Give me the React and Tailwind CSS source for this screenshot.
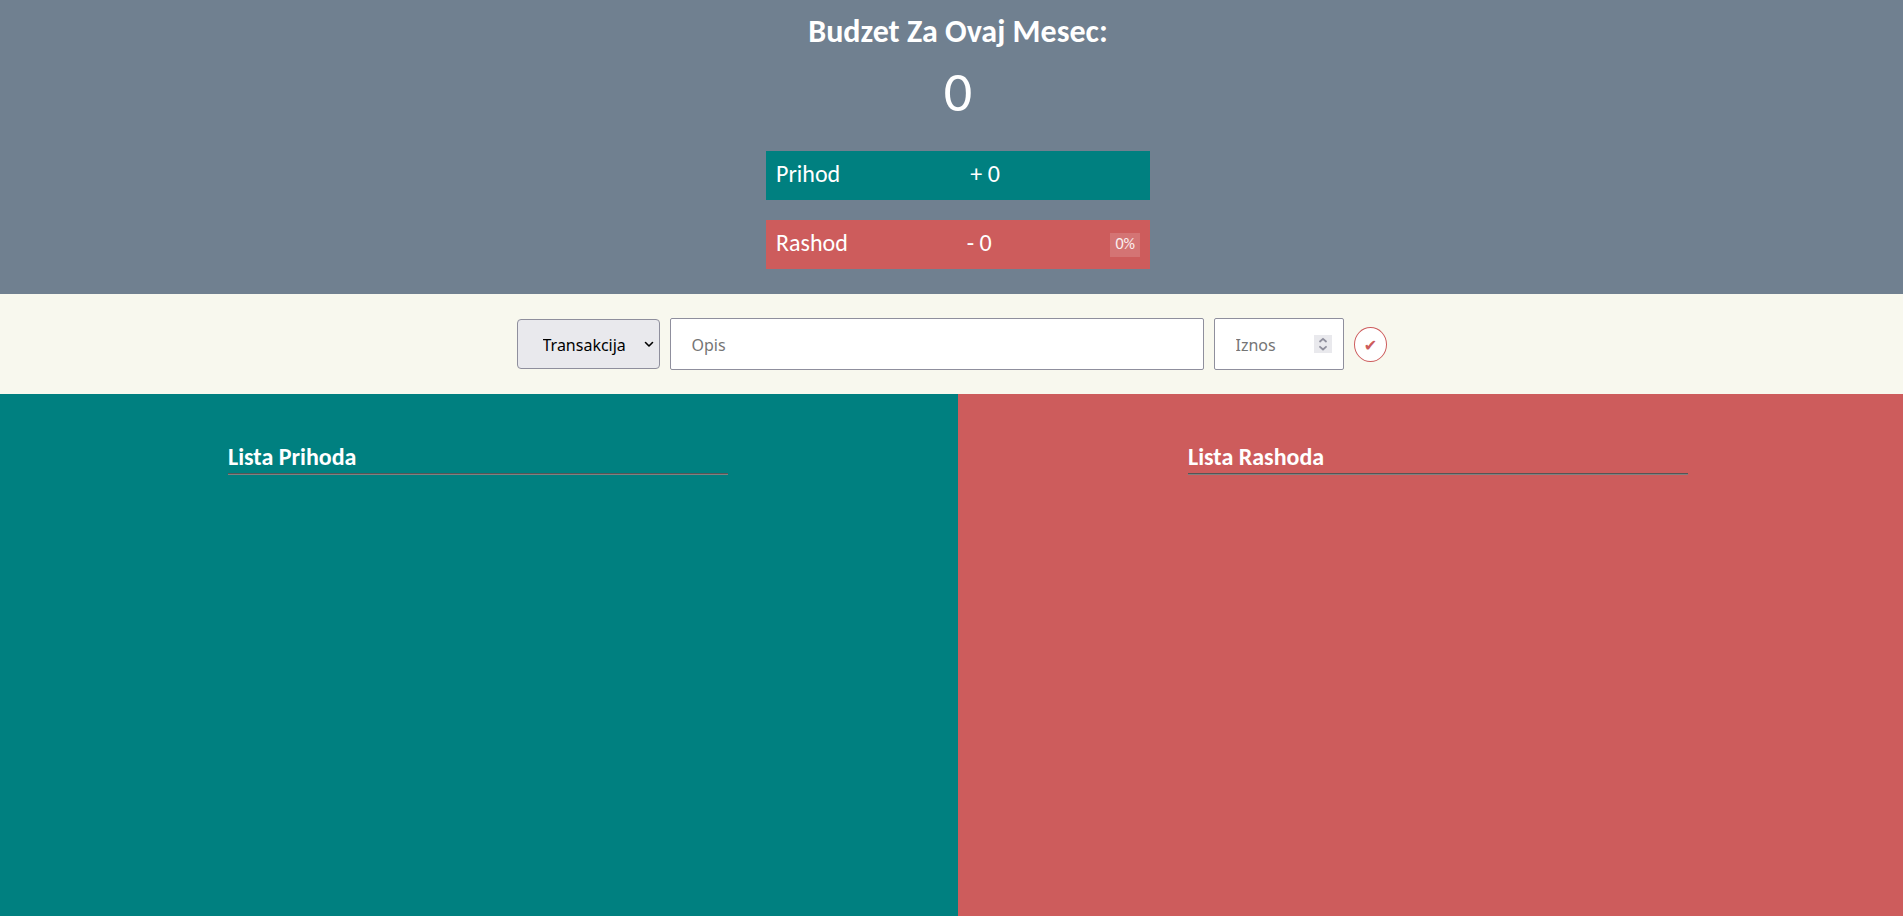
import { useState } from "react";

function SummaryRow({ label, value, className, badge, badgeClassName = "" }) {
  return (
    <div className={`flex h-[49px] w-96 items-center justify-between px-[10px] pb-1 text-2xl ${className}`}>
      <span>{label}</span>
      <span>{value}</span>
      <span className={`mt-1 px-[5px] pb-[2px] text-base leading-[22px] ${badgeClassName}`}>{badge}</span>
    </div>
  );
}

function TransactionList({ title, className, ruleClassName }) {
  return (
    <section className={`flex justify-center pt-[47px] ${className}`}>
      <div className="w-[500px]">
        <h2 className="pb-px text-2xl leading-[31px] font-bold">{title}</h2>
        <hr className={`h-[2px] border-t border-b ${ruleClassName}`} />
      </div>
    </section>
  );
}

export default function App() {
  const [type, setType] = useState("");
  return (
    <main className="flex min-h-screen flex-col overflow-hidden bg-[#f8f8ee] font-[Carlito,Calibri,Lato,sans-serif] text-white">
      <header className="flex flex-col items-center bg-[#708090] pt-3 pb-[25px] pl-[13px]">
        <h1 className="text-[32px] leading-10 font-bold">Budzet Za Ovaj Mesec:</h1>
        <p className="mt-[7px] mb-[25px] text-[56px] leading-[67px]">0</p>
        <SummaryRow label="Prihod" value="+ 0" className="mb-5 bg-[#008080]" />
        <SummaryRow
          label="Rashod"
          value="- 0"
          className="bg-[#cd5c5c]"
          badge="0%"
          badgeClassName="bg-white/15 text-white/90"
        />
      </header>

      <form
        className="flex h-[100px] items-center justify-center gap-[10px] font-['Noto_Sans',sans-serif] text-base text-black"
        onSubmit={(e) => e.preventDefault()}
      >
        <div className="grid w-[143px] grid-cols-1 items-center">
          <select
            aria-label="Transakcija"
            value={type}
            onChange={(e) => setType(e.target.value)}
            className="col-start-1 row-start-1 h-[50px] w-full appearance-none rounded-[4px] border border-[#8f8f9d] bg-[#e9e9ed] pt-[2px] pl-[25px]"
          >
            <option value="">Transakcija</option>
            <option value="prihod">Prihod</option>
            <option value="rashod">Rashod</option>
          </select>
          <svg className="pointer-events-none col-start-1 row-start-1 mr-[6px] justify-self-end" width="10" height="8" viewBox="0 0 10 8" fill="none" stroke="black" strokeWidth="1.6" strokeLinecap="round" strokeLinejoin="round">
            <path d="M1.5 2.5L5 6L8.5 2.5" />
          </svg>
        </div>
        <input
          type="text"
          aria-label="Opis"
          placeholder="Opis"
          className="h-[52px] w-[534px] rounded-[2px] border border-[#8f8f9d] bg-white px-[21px] pt-[2px] placeholder:text-[#757575]"
        />
        <div className="grid w-[130px] grid-cols-1 items-center">
          <input
            type="number"
            aria-label="Iznos"
            placeholder="Iznos"
            className="col-start-1 row-start-1 h-[52px] w-full appearance-none rounded-[2px] border border-[#8f8f9d] bg-white px-[21px] pt-[2px] [appearance:textfield] placeholder:text-[#757575]"
          />
          <svg className="pointer-events-none col-start-1 row-start-1 mr-3 justify-self-end" width="18" height="18" viewBox="0 0 18 18" fill="none" stroke="#8f8f9d" strokeWidth="1.8">
            <rect width="18" height="18" fill="#e9e9ed" stroke="none" />
            <path d="M6 6.5L9 3.8L12 6.5M6 11.8L9 14.5L12 11.8" strokeLinecap="round" strokeLinejoin="round" />
          </svg>
        </div>
        <button
          type="submit"
          aria-label="Dodaj"
          className="flex h-[35px] w-[33px] items-center justify-center rounded-[50%] border border-[#cd5c5c] bg-white pt-[3px] pl-px font-['DejaVu_Sans',sans-serif] text-base text-[#cd5c5c]"
        >
          ✔
        </button>
      </form>

      <div className="grid w-[calc(100%+13px)] grow grid-cols-2">
        <TransactionList title="Lista Prihoda" className="bg-[#008080] pr-[2px]" ruleClassName="border-t-[#555555] border-b-[#808080]" />
        <TransactionList title="Lista Rashoda" className="bg-[#cd5c5c] pl-[2px]" ruleClassName="border-t-[#555555] border-b-[#808080]" />
      </div>
    </main>
  );
}
